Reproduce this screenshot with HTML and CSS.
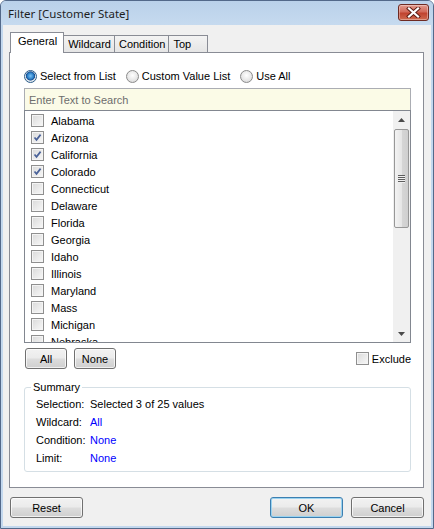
FILE: index.html
```html
<!DOCTYPE html>
<html>
<head>
<meta charset="utf-8">
<title>Filter [Customer State]</title>
<link rel="stylesheet" href="styles.css">
</head>
<body>
<div class="window">
  <div class="titlebar">
    <span class="title">Filter [Customer State]</span>
    <div class="close">
      <svg width="15" height="11" viewBox="0 0 15 11">
        <path d="M3 1.5 L12 9.5 M12 1.5 L3 9.5" stroke="#5a1a12" stroke-width="4" stroke-linecap="square" fill="none"/>
        <path d="M3 1.5 L12 9.5 M12 1.5 L3 9.5" stroke="#ffffff" stroke-width="2.2" stroke-linecap="square" fill="none"/>
      </svg>
    </div>
  </div>
  <div class="client">
    <div class="tabs">
      <div class="tab active">General</div>
      <div class="tab">Wildcard</div>
      <div class="tab">Condition</div>
      <div class="tab">Top</div>
    </div>
    <div class="panel">
      <div class="radios">
        <label class="radio"><span class="rb on"></span>Select from List</label>
        <label class="radio"><span class="rb"></span>Custom Value List</label>
        <label class="radio"><span class="rb"></span>Use All</label>
      </div>
      <div class="search">Enter Text to Search</div>
      <div class="list">
        <div class="items">
          <div class="row"><span class="cb"></span>Alabama</div>
          <div class="row"><span class="cb"><svg viewBox="0 0 11 11" width="11" height="11"><path d="M2.5 5.5 L4.5 7.8 L8.6 2.6" stroke="#4a6299" stroke-width="1.7" fill="none"/></svg></span>Arizona</div>
          <div class="row"><span class="cb"><svg viewBox="0 0 11 11" width="11" height="11"><path d="M2.5 5.5 L4.5 7.8 L8.6 2.6" stroke="#4a6299" stroke-width="1.7" fill="none"/></svg></span>California</div>
          <div class="row"><span class="cb"><svg viewBox="0 0 11 11" width="11" height="11"><path d="M2.5 5.5 L4.5 7.8 L8.6 2.6" stroke="#4a6299" stroke-width="1.7" fill="none"/></svg></span>Colorado</div>
          <div class="row"><span class="cb"></span>Connecticut</div>
          <div class="row"><span class="cb"></span>Delaware</div>
          <div class="row"><span class="cb"></span>Florida</div>
          <div class="row"><span class="cb"></span>Georgia</div>
          <div class="row"><span class="cb"></span>Idaho</div>
          <div class="row"><span class="cb"></span>Illinois</div>
          <div class="row"><span class="cb"></span>Maryland</div>
          <div class="row"><span class="cb"></span>Mass</div>
          <div class="row"><span class="cb"></span>Michigan</div>
          <div class="row"><span class="cb"></span>Nebraska</div>
        </div>
        <div class="vscroll">
          <div class="arrow"><svg width="7" height="4" viewBox="0 0 7 4"><path d="M0 4 L3.5 0 L7 4 Z" fill="#4a4a4a"/></svg></div>
          <div class="track"><div class="thumb"><span class="grip"></span></div></div>
          <div class="arrow"><svg width="7" height="4" viewBox="0 0 7 4"><path d="M0 0 L7 0 L3.5 4 Z" fill="#4a4a4a"/></svg></div>
        </div>
      </div>
      <div class="listbtns">
        <button class="btn small">All</button>
        <button class="btn small">None</button>
        <label class="exclude"><span class="cb"></span>Exclude</label>
      </div>
      <fieldset class="summary">
        <legend>Summary</legend>
        <div class="sumgrid">
          <span>Selection:</span><span>Selected 3 of 25 values</span>
          <span>Wildcard:</span><span class="link">All</span>
          <span>Condition:</span><span class="link">None</span>
          <span>Limit:</span><span class="link">None</span>
        </div>
      </fieldset>
    </div>
    <div class="footer">
      <button class="btn wide">Reset</button>
      <div class="spacer"></div>
      <button class="btn wide default">OK</button>
      <button class="btn wide">Cancel</button>
    </div>
  </div>
</div>
</body>
</html>
```
FILE: styles.css
```css
* { box-sizing: border-box; }
html, body { margin: 0; padding: 0; }
body {
  width: 434px;
  height: 529px;
  background: #ffffff;
  font-family: "Liberation Sans", Arial, sans-serif;
  font-size: 11px;
  color: #000;
  overflow: hidden;
}
.window {
  width: 434px;
  height: 529px;
  border: 1px solid #53698a;
  border-radius: 6px 6px 0 0;
  background: #c3d8ee;
  display: flex;
  flex-direction: column;
}
.titlebar {
  height: 24px;
  flex: none;
  display: flex;
  align-items: center;
  justify-content: space-between;
  padding: 0 4px 0 7px;
  border-radius: 5px 5px 0 0;
  background: linear-gradient(#bad1ea, #c6daef);
}
.title {
  font-family: "Noto Sans", "DejaVu Sans", sans-serif;
  font-size: 11.5px;
  color: #1e1e1e;
}
.close {
  width: 31px;
  height: 17px;
  margin-top: -1px;
  border: 1px solid #6e2a22;
  border-radius: 3px;
  background: linear-gradient(#e29a8e 0%, #d26a5a 45%, #c0432f 55%, #cf6a4f 100%);
  display: flex;
  align-items: center;
  justify-content: center;
  box-shadow: inset 0 0 0 1px rgba(255,255,255,0.35);
}
.client {
  flex: 1;
  margin: 0 2px 2px 2px;
  background: #f0f0f0;
  padding: 7px 7px 0 6px;
  display: flex;
  flex-direction: column;
}
.tabs {
  height: 20px;
  display: flex;
  align-items: flex-end;
  padding-left: 1px;
  position: relative;
  z-index: 1;
}
.tab {
  height: 17px;
  min-width: 40px;
  margin-left: -1px;
  padding: 0 3px 0 4px;
  border: 1px solid #898c95;
  border-bottom: none;
  background: linear-gradient(#f3f3f3, #e5e5e5);
  display: flex;
  align-items: center;
  line-height: 13px;
}
.tab:first-child { margin-left: 0; }
.tab.active {
  height: 21px;
  margin-bottom: -1px;
  padding: 0 6px 3px 7px;
  background: #ffffff;
  position: relative;
  z-index: 2;
}
.tab.active + .tab { margin-left: 0; border-left: none; }
.panel {
  height: 436px;
  flex: none;
  background: #ffffff;
  border: 1px solid #898c95;
  padding: 0 12px 0 14px;
  display: flex;
  flex-direction: column;
}
.radios {
  margin-top: 16px;
  height: 14px;
  display: flex;
  align-items: center;
}
.radio {
  display: flex;
  align-items: center;
  gap: 3px;
  margin-right: 10px;
  white-space: nowrap;
}
.rb {
  width: 13px;
  height: 13px;
  border-radius: 50%;
  border: 1px solid #8b8b8b;
  background: radial-gradient(circle at 50% 40%, #ffffff 0%, #e8e8e8 55%, #cfcfcf 100%);
  display: inline-block;
  flex: none;
}
.rb.on {
  border-color: #2c5d8a;
  background: radial-gradient(circle at 50% 45%, #7cc3f5 0%, #2a7fc8 38%, #1c4f8f 52%, #dfe8f0 60%, #e9e9e9 80%, #cfcfcf 100%);
}
.search {
  margin-top: 5px;
  height: 22px;
  border: 1px solid #abadb3;
  border-bottom: none;
  background: #fbfbe7;
  color: #6d6d6d;
  padding-left: 4px;
  display: flex;
  align-items: center;
}
.list {
  height: 233px;
  border: 1px solid #828790;
  display: flex;
  overflow: hidden;
}
.items {
  flex: 1;
  padding: 1px 0 0 6px;
  overflow: hidden;
}
.row {
  height: 17px;
  display: flex;
  align-items: center;
  gap: 7px;
  white-space: nowrap;
}
.cb {
  width: 13px;
  height: 13px;
  flex: none;
  border: 1px solid #8f8f8f;
  background: linear-gradient(135deg, #d9d9d9 0%, #ececec 60%, #f7f7f7 100%);
  box-shadow: inset 0 0 0 1px #f4f4f4;
  display: inline-flex;
  align-items: center;
  justify-content: center;
}
.cb svg { display: block; }
.vscroll {
  width: 17px;
  flex: none;
  background: #f0f0f0;
  display: flex;
  flex-direction: column;
}
.arrow {
  height: 17px;
  flex: none;
  display: flex;
  align-items: center;
  justify-content: center;
}
.arrow svg { display: block; }
.track {
  flex: 1;
  padding: 1px 1px 0 1px;
}
.thumb {
  height: 99px;
  border: 1px solid #979797;
  border-radius: 2px;
  background: linear-gradient(90deg, #f3f3f3 0%, #e6e6e6 50%, #d6d6d6 51%, #cfcfcf 100%);
  display: flex;
  align-items: center;
  justify-content: center;
}
.grip {
  width: 7px;
  height: 8px;
  background: repeating-linear-gradient(#5e5e5e 0 1px, #f0f0f0 1px 2px);
}
.listbtns {
  margin-top: 5px;
  height: 21px;
  display: flex;
  align-items: center;
  padding-left: 1px;
}
.btn {
  font-family: inherit;
  font-size: 11px;
  color: #000;
  height: 21px;
  border: 1px solid #707070;
  border-radius: 3px;
  background: linear-gradient(#f2f2f2 0%, #ebebeb 48%, #dddddd 52%, #cfcfcf 100%);
  box-shadow: inset 0 0 0 1px rgba(255,255,255,0.7);
  padding: 0;
}
.btn.small { width: 42px; margin-right: 7px; }
.exclude {
  margin-left: auto;
  display: flex;
  align-items: center;
  gap: 3px;
}
.summary {
  margin: 12px 0 0 0;
  height: 91px;
  border: 1px solid #d5dfe5;
  border-radius: 3px;
  padding: 0 0 0 11px;
  min-width: 0;
}
.summary legend {
  margin-left: -5px;
  padding: 0 2px;
  line-height: 13px;
}
.sumgrid {
  display: grid;
  grid-template-columns: 54px auto;
  grid-auto-rows: 18px;
  align-items: center;
  padding-top: 1px;
}
.link { color: #0000ff; }
.footer {
  flex: 1;
  display: flex;
  align-items: flex-start;
  padding-top: 9px;
  padding-left: 1px;
}
.spacer { flex: 1; }
.btn.wide { width: 73px; }
.btn.default {
  border-color: #3c7fb1;
  box-shadow: inset 0 0 0 1px #9ad3f0;
  margin-right: 8px;
}
```
